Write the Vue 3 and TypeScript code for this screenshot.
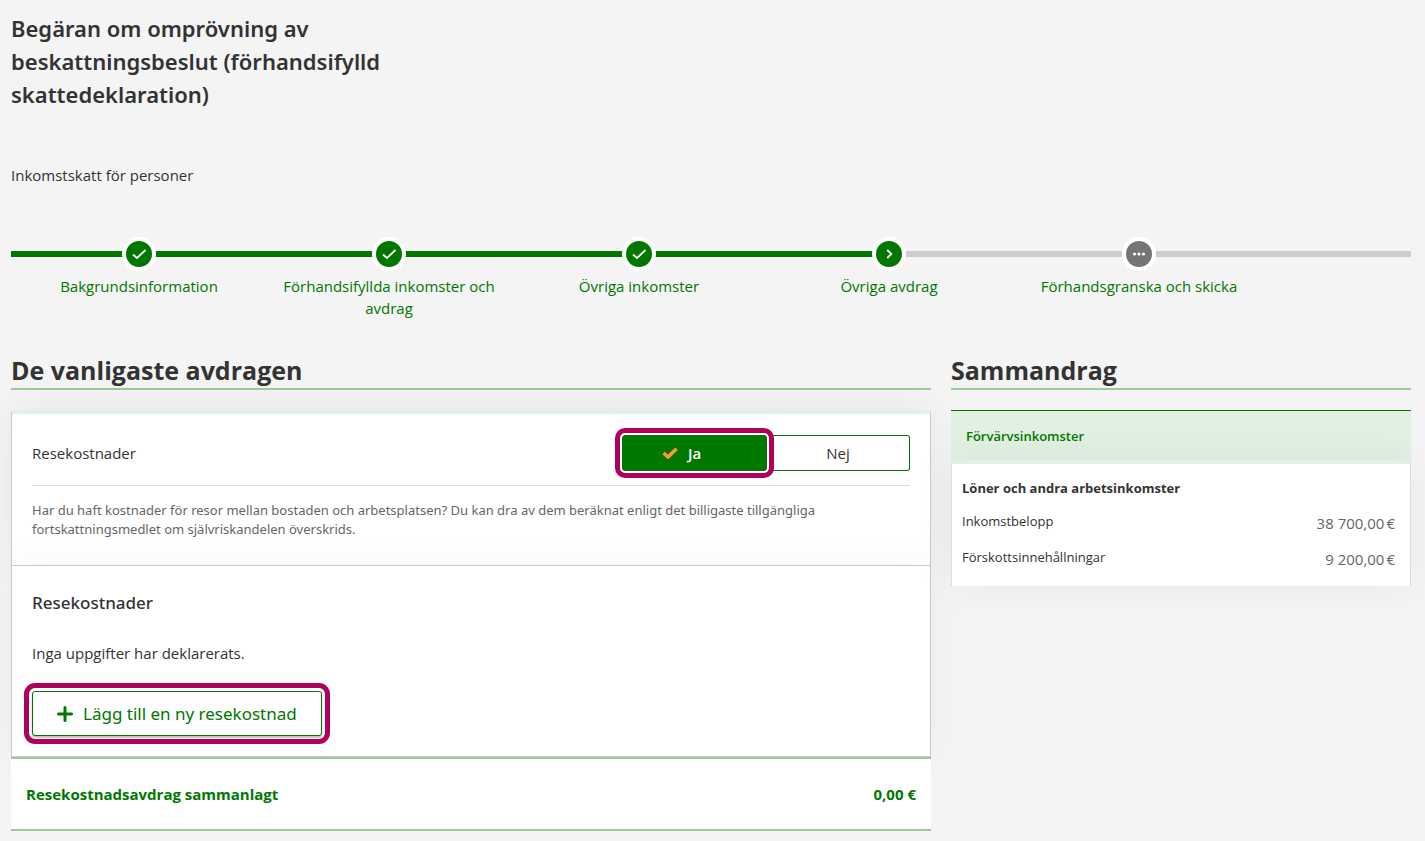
<script setup lang="ts">
import { computed, ref } from 'vue'

type StepState = 'done' | 'current' | 'upcoming'

interface Step {
  label: string
  state: StepState
}

interface SummaryRow {
  label: string
  amount: string
}

const steps: Step[] = [
  { label: 'Bakgrundsinformation', state: 'done' },
  { label: 'Förhandsifyllda inkomster och avdrag', state: 'done' },
  { label: 'Övriga inkomster', state: 'done' },
  { label: 'Övriga avdrag', state: 'current' },
  { label: 'Förhandsgranska och skicka', state: 'upcoming' },
]

const summaryRows: SummaryRow[] = [
  { label: 'Inkomstbelopp', amount: '38 700,00' },
  { label: 'Förskottsinnehållningar', amount: '9 200,00' },
]

const answer = ref<'ja' | 'nej'>('ja')
const hasTravelCosts = computed(() => answer.value === 'ja')
</script>

<template>
  <div class="page">
    <header>
      <h1>Begäran om omprövning av beskattningsbeslut (förhandsifylld skattedeklaration)</h1>
      <p class="tax-type">Inkomstskatt för personer</p>
    </header>

    <nav aria-label="Steg">
      <ol class="steps">
        <li v-for="step in steps" :key="step.label" class="step" :class="step.state">
          <a href="#" class="step-link">
            <span class="marker">
              <svg v-if="step.state === 'done'" viewBox="0 0 26 26" aria-hidden="true">
                <path d="M7 13.5 L11 17 L19.5 9" />
              </svg>
              <svg v-else-if="step.state === 'current'" viewBox="0 0 26 26" aria-hidden="true">
                <path d="M11.3 9 L15.3 13 L11.3 17" />
              </svg>
              <svg v-else viewBox="0 0 26 26" aria-hidden="true">
                <g class="dots">
                  <path d="M7 13 H19" />
                  <circle cx="8.5" cy="13" r="1.6" />
                  <circle cx="13" cy="13" r="1.6" />
                  <circle cx="17.5" cy="13" r="1.6" />
                </g>
              </svg>
            </span>
            <span class="step-label">{{ step.label }}</span>
          </a>
        </li>
      </ol>
    </nav>

    <div class="columns">
      <main>
        <h2>De vanligaste avdragen</h2>

        <section class="question">
          <div class="question-row" role="radiogroup" aria-labelledby="travel-label">
            <span id="travel-label">Resekostnader</span>
            <div class="toggle">
              <label class="option yes" :class="{ selected: answer === 'ja' }">
                <input v-model="answer" type="radio" name="travel" value="ja" />
                <svg v-if="answer === 'ja'" class="tick" viewBox="0 0 16 12" aria-hidden="true">
                  <path d="M1.5 6 L6 10 L14.5 1.8" />
                </svg>
                <span>Ja</span>
              </label>
              <label class="option no" :class="{ selected: answer === 'nej' }">
                <input v-model="answer" type="radio" name="travel" value="nej" />
                <span>Nej</span>
              </label>
            </div>
          </div>
          <p class="help">
            Har du haft kostnader för resor mellan bostaden och arbetsplatsen? Du kan dra av dem
            beräknat enligt det billigaste tillgängliga fortskattningsmedlet om självriskandelen
            överskrids.
          </p>
        </section>

        <section v-if="hasTravelCosts" class="costs">
          <h3>Resekostnader</h3>
          <p class="empty">Inga uppgifter har deklarerats.</p>
          <button type="button" class="add">
            <svg viewBox="0 0 16 16" aria-hidden="true">
              <path d="M8 1.5 V14.5 M1.5 8 H14.5" />
            </svg>
            Lägg till en ny resekostnad
          </button>
        </section>

        <div class="total">
          <span>Resekostnadsavdrag sammanlagt</span>
          <span>0,00 €</span>
        </div>
      </main>

      <aside>
        <h2>Sammandrag</h2>
        <h3 class="band">Förvärvsinkomster</h3>
        <div class="summary">
          <h4>Löner och andra arbetsinkomster</h4>
          <dl>
            <div v-for="row in summaryRows" :key="row.label" class="summary-row">
              <dt>{{ row.label }}</dt>
              <dd>{{ row.amount }}<span class="unit">€</span></dd>
            </div>
          </dl>
        </div>
      </aside>
    </div>
  </div>
</template>

<style>
body {
  background: #f4f4f4;
}
</style>

<style scoped>
.page {
  box-sizing: border-box;
  padding: 12px 14px 10px 11px;
  font-family: 'Open Sans', 'Noto Sans', sans-serif;
  font-size: 15px;
  line-height: 22px;
  color: #333;
}

h1,
h2,
h3,
h4,
p,
dl,
dd,
ol {
  margin: 0;
  padding: 0;
}

h1 {
  max-width: 400px;
  font-family: 'Noto Sans', 'Open Sans', sans-serif;
  font-size: 22px;
  line-height: 33px;
  font-weight: 600;
}

.tax-type {
  margin-top: 53px;
}

.steps {
  display: grid;
  grid-template-columns: repeat(5, minmax(0, 250fr)) minmax(0, 147fr);
  margin-top: 51px;
  padding-left: 3px;
  list-style: none;
  background: linear-gradient(#cdcdcd, #cdcdcd) 0 14px / 100% 6px no-repeat;
}

.step {
  background: linear-gradient(#007800, #007800) 0 14px / 100% 6px no-repeat;
}

.step:first-child {
  margin-left: -3px;
  padding-left: 3px;
}

.step.current {
  background-size: 50% 6px;
}

.step.upcoming {
  background: none;
}

.step-link {
  display: flex;
  flex-direction: column;
  align-items: center;
  color: #007800;
  text-decoration: none;
}

.marker {
  box-sizing: border-box;
  width: 34px;
  height: 34px;
  border: 4px solid #fff;
  border-radius: 50%;
  background: #fff;
}

.marker svg {
  display: block;
  border-radius: 50%;
  background: #007800;
  fill: none;
  stroke: #fff;
  stroke-width: 1.8;
}

.upcoming .marker svg {
  background: #757575;
}

.dots {
  fill: #fff;
  stroke: none;
}

.step-label {
  max-width: 230px;
  margin-top: 4px;
  text-align: center;
}

.columns {
  display: grid;
  grid-template-columns: minmax(0, 2fr) minmax(0, 1fr);
  align-items: start;
  gap: 20px;
  margin-top: 34px;
}

h2 {
  margin-bottom: 20px;
  border-bottom: 2px solid #99cc99;
  font-size: 25px;
  line-height: 35px;
  font-weight: 700;
}

.question {
  padding: 21px 20px 26px;
  border: 1px solid #c8c8c8;
  border-top: 4px solid #e5f0e5;
  border-bottom: 0;
  background: #fff;
  box-shadow: 0 0 40px rgba(0, 0, 0, 0.06);
}

.question-row {
  display: flex;
  align-items: center;
  justify-content: space-between;
  padding-bottom: 14px;
  border-bottom: 1px solid #dcdcdc;
}

.toggle {
  display: grid;
  grid-template-columns: 145px 143px;
}

.option {
  position: relative;
  box-sizing: border-box;
  display: flex;
  align-items: center;
  justify-content: center;
  gap: 10px;
  height: 36px;
  border: 1px solid #007800;
  cursor: pointer;
}

.option input {
  position: absolute;
  inset: 0;
  width: 100%;
  height: 100%;
  margin: 0;
  opacity: 0;
  cursor: pointer;
}

.option.yes {
  z-index: 1;
  padding-right: 26px;
  border-radius: 3px;
  outline: 5px solid #b0005c;
  outline-offset: 2px;
  box-shadow: 0 0 0 2px #fff;
}

.option.no {
  border-left: 0;
  border-radius: 0 3px 3px 0;
}

.option.selected {
  background: #007800;
  color: #fff;
  font-weight: 600;
}

.tick {
  width: 16px;
  height: 12px;
  fill: none;
  stroke: #ff9933;
  stroke-width: 3.6;
}

.help {
  margin-top: 15px;
  font-family: 'Noto Sans', 'Open Sans', sans-serif;
  font-size: 13px;
  line-height: 19px;
  color: #666;
}

.costs {
  padding: 26px 20px 20px;
  border: 1px solid #c8c8c8;
  background: #fff;
  box-shadow: 0 0 40px rgba(0, 0, 0, 0.04);
}

.costs h3 {
  font-family: 'Noto Sans', 'Open Sans', sans-serif;
  font-size: 17px;
  line-height: 22px;
  font-weight: 500;
}

.empty {
  margin-top: 28px;
}

.add {
  box-sizing: border-box;
  display: flex;
  align-items: center;
  gap: 10px;
  height: 45px;
  margin-top: 27px;
  padding: 0 24px;
  border: 1px solid #007800;
  border-radius: 3px;
  background: #fff;
  box-shadow: 0 2px 2px rgba(0, 0, 0, 0.25);
  outline: 5px solid #b0005c;
  outline-offset: 3px;
  color: #007800;
  font-family: 'Noto Sans', 'Open Sans', sans-serif;
  font-size: 17px;
  cursor: pointer;
}

.add svg {
  width: 16px;
  height: 16px;
  fill: none;
  stroke: currentColor;
  stroke-width: 3;
  stroke-linecap: round;
}

.total {
  position: relative;
  display: flex;
  justify-content: space-between;
  padding: 24px 15px;
  border-top: 2px solid #99cc99;
  border-bottom: 2px solid #99cc99;
  background: #fff;
  color: #007800;
  font-weight: 700;
}

.band {
  padding: 15px 15px 13px;
  border-top: 1px solid #007800;
  background: #e1f0e1;
  color: #007800;
  font-size: 13px;
  line-height: 21px;
  font-weight: 600;
}

.summary {
  padding: 14px 15px 16px 10px;
  border: 1px solid #dcdcdc;
  border-top: 4px solid #e5f0e5;
  border-bottom: 0;
  background: #fff;
  box-shadow: 0 0 40px rgba(0, 0, 0, 0.05);
  font-size: 13px;
}

.summary h4 {
  font-size: 13px;
  line-height: 20px;
  font-weight: 700;
}

.summary-row {
  display: flex;
  justify-content: space-between;
  height: 36px;
}

.summary-row:last-child {
  height: 24px;
}

dl {
  margin-top: 12px;
}

dt {
  line-height: 22px;
}

dd {
  padding-top: 2px;
  font-size: 15px;
  color: #666;
}

.unit {
  margin-left: 2px;
}
</style>
